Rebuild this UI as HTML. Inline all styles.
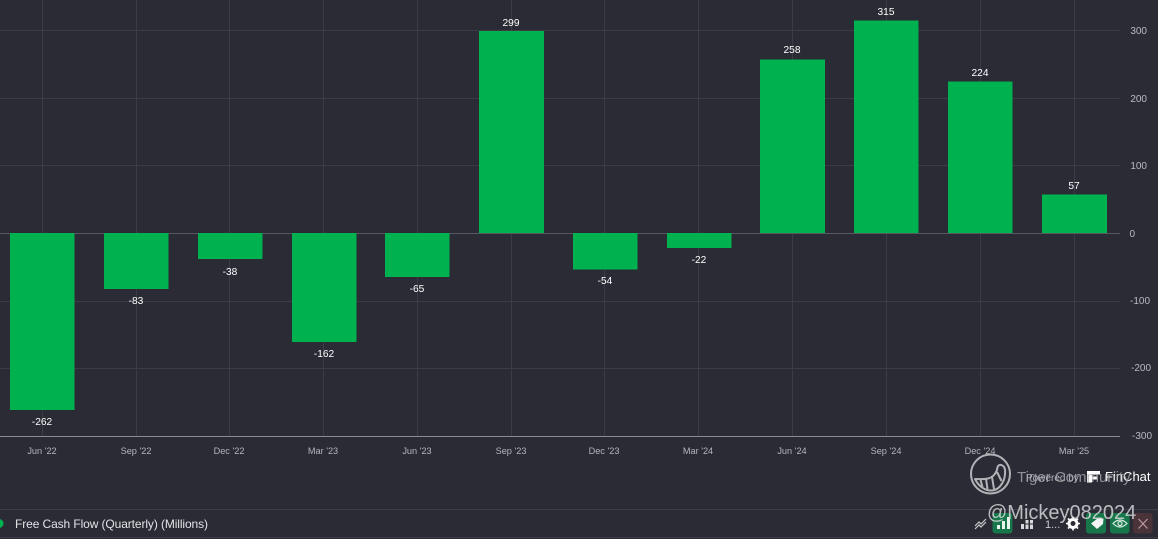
<!DOCTYPE html>
<html lang="en">
<head>
<meta charset="utf-8">
<title>Free Cash Flow (Quarterly)</title>
<style>
html,body{margin:0;padding:0;width:1158px;height:539px;overflow:hidden;background:#2a2b35}
svg{display:block;position:absolute;left:0;top:0}
text{font-family:"Liberation Sans",sans-serif}
.v{fill:#fff;font-size:10.2px;text-anchor:middle}
.x{fill:#b4b5ba;font-size:9.2px;text-anchor:middle}
.y{fill:#b9babf;font-size:10px;text-anchor:end}
.g{stroke:#3b3c46;stroke-width:1;fill:none}
.b{fill:#00b150}
</style>
</head>
<body>
<svg width="1158" height="539" viewBox="0 0 1158 539" xmlns="http://www.w3.org/2000/svg">
<rect width="1158" height="539" fill="#2a2b35"/>
<!-- grid -->
<g class="g">
<path d="M42.500 0V436M136.500 0V436M229.500 0V436M323.500 0V436M417.500 0V436M511.500 0V436M604.500 0V436M698.500 0V436M792.500 0V436M886.500 0V436M980.500 0V436M1074.500 0V436"/>
<path d="M0 30.500H1120M0 98.500H1120M0 165.500H1120M0 301.500H1120M0 368.500H1120"/>
</g>
<path d="M0 233.500H1120" stroke="#565761"/>
<path d="M0 436.500H1120" stroke="#8a8b92"/>
<path d="M0 509.500H1158" stroke="#3d3e48"/>
<path d="M0 537.500H1158" stroke="#3d3e48"/>
<!-- bars -->
<rect class="b" x="10" y="233" width="64.500" height="177"/>
<rect class="b" x="104" y="233" width="64.500" height="56"/>
<rect class="b" x="198" y="233" width="64.500" height="26"/>
<rect class="b" x="292" y="233" width="64.500" height="109"/>
<rect class="b" x="385" y="233" width="64.500" height="44"/>
<rect class="b" x="479" y="31" width="65" height="202"/>
<rect class="b" x="573" y="233" width="64.500" height="36.500"/>
<rect class="b" x="667" y="233" width="64.500" height="15"/>
<rect class="b" x="760" y="59.500" width="65" height="173.500"/>
<rect class="b" x="854" y="20.500" width="64.500" height="212.500"/>
<rect class="b" x="948" y="81.500" width="64.500" height="151.500"/>
<rect class="b" x="1042" y="194.500" width="65" height="38.500"/>
<!-- value labels -->
<text class="v" x="42" y="425">-262</text>
<text class="v" x="136" y="304">-83</text>
<text class="v" x="230" y="275">-38</text>
<text class="v" x="324" y="357">-162</text>
<text class="v" x="417" y="292">-65</text>
<text class="v" x="511" y="26">299</text>
<text class="v" x="605" y="284">-54</text>
<text class="v" x="699" y="263">-22</text>
<text class="v" x="792" y="53">258</text>
<text class="v" x="886" y="15">315</text>
<text class="v" x="980" y="76">224</text>
<text class="v" x="1074" y="189">57</text>
<!-- y labels -->
<text class="y" x="1147" y="34">300</text>
<text class="y" x="1147" y="102">200</text>
<text class="y" x="1147" y="169">100</text>
<text class="y" x="1135" y="237">0</text>
<text class="y" x="1150" y="304">-100</text>
<text class="y" x="1151" y="371">-200</text>
<text class="y" x="1152" y="439">-300</text>
<!-- x labels -->
<text class="x" x="42" y="454">Jun '22</text>
<text class="x" x="136" y="454">Sep '22</text>
<text class="x" x="229" y="454">Dec '22</text>
<text class="x" x="323" y="454">Mar '23</text>
<text class="x" x="417" y="454">Jun '23</text>
<text class="x" x="511" y="454">Sep '23</text>
<text class="x" x="604" y="454">Dec '23</text>
<text class="x" x="698" y="454">Mar '24</text>
<text class="x" x="792" y="454">Jun '24</text>
<text class="x" x="886" y="454">Sep '24</text>
<text class="x" x="980" y="454">Dec '24</text>
<text class="x" x="1074" y="454">Mar '25</text>
<!-- legend -->
<circle cx="-1" cy="523.500" r="4.500" fill="#00b150"/>
<text x="15" y="528" fill="#e2e3e6" font-size="12" textLength="193" lengthAdjust="spacing">Free Cash Flow (Quarterly) (Millions)</text>
<!-- powered by -->
<text x="1026" y="481" fill="#b4b5ba" font-size="10">Powered by</text>
<path d="M1087 471h13v3.500h-8v2h5v3h-5v3h-5z" fill="#fff"/>
<text x="1105" y="481" fill="#fff" font-size="13">FinChat</text>
<!-- toolbar -->
<path d="M975 526l4-4 2 2 5-5M975 529l4-4 2 2 5-5" stroke="#c8c9cd" stroke-width="1.200" fill="none"/>
<rect x="992.500" y="513" width="20" height="20.500" rx="3" fill="#17774a"/>
<path d="M997 525h3v4h-3zM1002 521h3v8h-3zM1007 517h3v12h-3z" fill="#e8f3ec"/>
<path d="M1021 524h3v5h-3zM1025.500 520h3v3.500h-3zM1025.500 524.500h3v4.500h-3zM1030 520h3v3.500h-3zM1030 524.500h3v4.500h-3z" fill="#d8d9dc"/>
<text x="1045" y="528" fill="#c8c9cd" font-size="11">1...</text>
<circle cx="1073" cy="523.500" r="4" fill="none" stroke="#fff" stroke-width="3"/>
<path d="M1073 516.500v2M1073 528.500v2M1066 523.500h2M1078 523.500h2M1068 518.500l1.500 1.500M1076.500 527l1.500 1.500M1078 518.500l-1.500 1.500M1069.500 527l-1.500 1.500" stroke="#fff" stroke-width="1.600"/>
<rect x="1086" y="513" width="20" height="20.500" rx="3" fill="#17774a"/>
<path d="M1091 523.500l6.500-5h6l-.5 5.500-6 5z" fill="#f2f5f3"/>
<rect x="1110" y="513" width="19.500" height="20.500" rx="3" fill="#17774a"/>
<path d="M1113 523.500q7-7 14 0q-7 7-14 0z" fill="none" stroke="#d8efe2" stroke-width="1.200"/>
<circle cx="1120" cy="523.500" r="2" fill="none" stroke="#d8efe2" stroke-width="1.200"/>
<rect x="1133" y="513" width="19.500" height="20.500" rx="3" fill="#4a3339"/>
<path d="M1138.500 519l9 9.500M1147.500 519l-9 9.500" stroke="#b99a9d" stroke-width="1.200"/>
<!-- watermark -->
<g opacity=".8">
<circle cx="990.500" cy="474" r="19.500" fill="none" stroke="#d5d5d8" stroke-width="2"/>
<path d="M975 479C979 487 986 491 992 490.500C1000 490 1006 480 1005 470C1004.500 465 999 463 997.500 467C997 472 994 477 988 478.500C983 479.500 978 479 975 479z" fill="none" stroke="#d5d5d8" stroke-width="2" stroke-linejoin="round"/>
<path d="M980.500 480l2 7M986 479l1.500 10M992 477l2 12M997 472l4.500 9" stroke="#d5d5d8" stroke-width="2"/>
<text x="1017" y="482" fill="#a9aaae" font-size="15">Tiger Community</text>
<text x="987" y="519" fill="#e0e0e2" font-size="20">@Mickey082024</text>
</g>
</svg>
</body>
</html>
